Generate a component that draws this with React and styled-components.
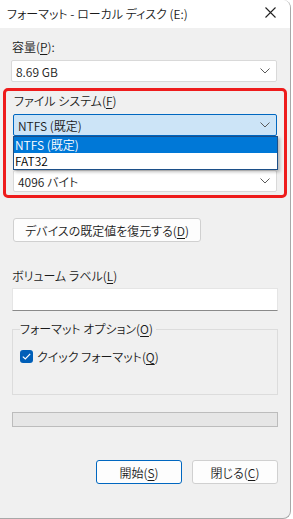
import React from 'react'
import styled, { createGlobalStyle } from 'styled-components'

const GlobalStyle = createGlobalStyle`
    html, body {
        margin: 0;
        padding: 0;
        background: #ffffff;
    }
    body {
        font-family: "Noto Sans CJK JP", "Noto Sans", sans-serif;
        font-size: 12px;
        font-weight: 350;
        color: #1a1a1a;
        font-feature-settings: "palt";
    }
`

function Chevron() {
    return (
        <svg width="10" height="6" viewBox="0 0 10 6">
            <path d="M0.5 0.5 L5 5 L9.5 0.5" fill="none" stroke="#5a5a5a" strokeWidth="1" />
        </svg>
    )
}

function Key({ children }) {
    return <U>{children}</U>
}

function App() {
    return (
        <>
            <GlobalStyle />
            <Window>
                <TitleBar>
                    <Title>フォーマット - ローカル ディスク (E:)</Title>
                    <CloseBtn>
                        <svg width="11" height="11" viewBox="0 0 11 11">
                            <path d="M0.5 0.5 L10.5 10.5 M10.5 0.5 L0.5 10.5" stroke="#222" strokeWidth="1.1" />
                        </svg>
                    </CloseBtn>
                </TitleBar>
                <Body>
                    <Label $top={11}>容量(<Key>P</Key>):</Label>
                    <Select>
                        <span>8.69 GB</span>
                        <Chevron />
                    </Select>

                    <Highlight>
                        <Label $top={0}>ファイル システム(<Key>F</Key>)</Label>
                        <Select $open>
                            <span>NTFS (既定)</span>
                            <Chevron />
                        </Select>
                        <DropArea>
                            {/* the allocation unit label sits under the open list */}
                            <Spacer />
                            <Select>
                                <span>4096 バイト</span>
                                <Chevron />
                            </Select>
                            <DropList>
                                <Option $active>NTFS (既定)</Option>
                                <Option>FAT32</Option>
                            </DropList>
                        </DropArea>
                    </Highlight>

                    <Button $top={20} $width={188}>デバイスの既定値を復元する(<Key>D</Key>)</Button>

                    <Label $top={26} $bottom={4}>ボリューム ラベル(<Key>L</Key>)</Label>
                    <Input />

                    <Group>
                        <Legend>フォーマット オプション(<Key>O</Key>)</Legend>
                        <CheckRow>
                            <Check>
                                <svg width="9" height="7" viewBox="0 0 9 7">
                                    <path d="M0.8 3.6 L3.3 6 L8.2 0.8" fill="none" stroke="#fff" strokeWidth="1.2" />
                                </svg>
                            </Check>
                            <span>クイック フォーマット(<Key>Q</Key>)</span>
                        </CheckRow>
                    </Group>

                    <Progress />

                    <Footer>
                        <Button $primary $width={86}>開始(<Key>S</Key>)</Button>
                        <Button $width={86}>閉じる(<Key>C</Key>)</Button>
                    </Footer>
                </Body>
            </Window>
        </>
    )
}

export default App

const Window = styled.div`
    width: 291px;
    height: 519px;
    box-sizing: border-box;
    background: #f0f0f0;
    border-right: 1px solid #a8a8a8;
    border-bottom: 1px solid #a8a8a8;
    border-radius: 0 8px 8px 0;
    overflow: hidden;
    display: flex;
    flex-direction: column;
`

const TitleBar = styled.div`
    height: 28px;
    background: #ffffff;
    display: flex;
    align-items: center;
    justify-content: space-between;
    padding: 0 14px 0 7px;
    flex-shrink: 0;
`

const Title = styled.div`
    font-size: 12px;
    color: #1a1a1a;
    margin-top: -2px;
`

const CloseBtn = styled.div`
    display: flex;
    align-items: center;
    margin-top: -3px;
`

const Body = styled.div`
    padding: 0 12px 0 12px;
    display: flex;
    flex-direction: column;
`

const U = styled.span`
    text-decoration: underline;
    text-underline-offset: 2px;
`

const Label = styled.div`
    margin-top: ${p => p.$top}px;
    height: 16px;
    line-height: 16px;
    margin-bottom: ${p => p.$bottom ?? 5}px;
    font-size: 12px;
`

const Spacer = styled.div`
    height: 16px;
    margin: 13px 0 5px 0;
`

const Select = styled.div`
    height: 22px;
    box-sizing: border-box;
    margin: 0 1px 0 -1px;
    display: flex;
    align-items: center;
    justify-content: space-between;
    padding: 0 6px 0 4px;
    background: ${p => (p.$open ? '#cce4f7' : '#ffffff')};
    border: 1px solid ${p => (p.$open ? '#0067c0' : '#d9d9d9')};
    border-radius: 2px;
    font-size: 12px;
`

const Highlight = styled.div`
    margin: 6px -9px 0 -9px;
    padding: 2px 6px 3px 8px;
    border: 3px solid #ee1c1c;
    border-radius: 5px;
    display: flex;
    flex-direction: column;
`

const DropArea = styled.div`
    position: relative;
    display: flex;
    flex-direction: column;
`

const DropList = styled.div`
    position: absolute;
    top: 0;
    left: -1px;
    right: 0;
    background: #ffffff;
    border: 1px solid #1c4f88;
    box-shadow: 2px 2px 3px rgba(0, 0, 0, 0.25);
`

const Option = styled.div`
    height: 16px;
    line-height: 16px;
    padding-left: 1px;
    font-size: 12px;
    background: ${p => (p.$active ? '#0078d7' : '#ffffff')};
    color: ${p => (p.$active ? '#ffffff' : '#000000')};
`

const Button = styled.div`
    margin-top: ${p => p.$top || 0}px;
    width: ${p => p.$width}px;
    height: 24px;
    box-sizing: border-box;
    display: flex;
    align-items: center;
    justify-content: center;
    background: #fdfdfd;
    border: 1px solid ${p => (p.$primary ? '#0067c0' : '#d0d0d0')};
    border-radius: 3px;
    font-size: 12px;
    margin-left: 1px;
`

const Input = styled.div`
    height: 23px;
    box-sizing: border-box;
    background: #ffffff;
    border: 1px solid #e5e5e5;
    border-bottom: 1px solid #8a8a8a;
`

const Group = styled.fieldset`
    margin: 10px 0 0 0;
    padding: 0 0 0 7px;
    height: 74px;
    box-sizing: border-box;
    border: 1px solid #dcdcdc;
    min-inline-size: auto;
`

const Legend = styled.legend`
    padding: 0 3px 0 0;
    margin-left: 0;
    font-size: 12px;
    line-height: 16px;
`

const CheckRow = styled.div`
    display: flex;
    align-items: center;
    gap: 4px;
    margin-top: 11px;
    font-size: 12px;
`

const Check = styled.div`
    width: 13px;
    height: 13px;
    border-radius: 3px;
    background: #005fb8;
    display: flex;
    align-items: center;
    justify-content: center;
`

const Progress = styled.div`
    margin-top: 17px;
    height: 15px;
    box-sizing: border-box;
    background: #e6e6e6;
    border: 1px solid #bcbcbc;
`

const Footer = styled.div`
    margin-top: 33px;
    display: flex;
    justify-content: flex-end;
    gap: 9px;
`
